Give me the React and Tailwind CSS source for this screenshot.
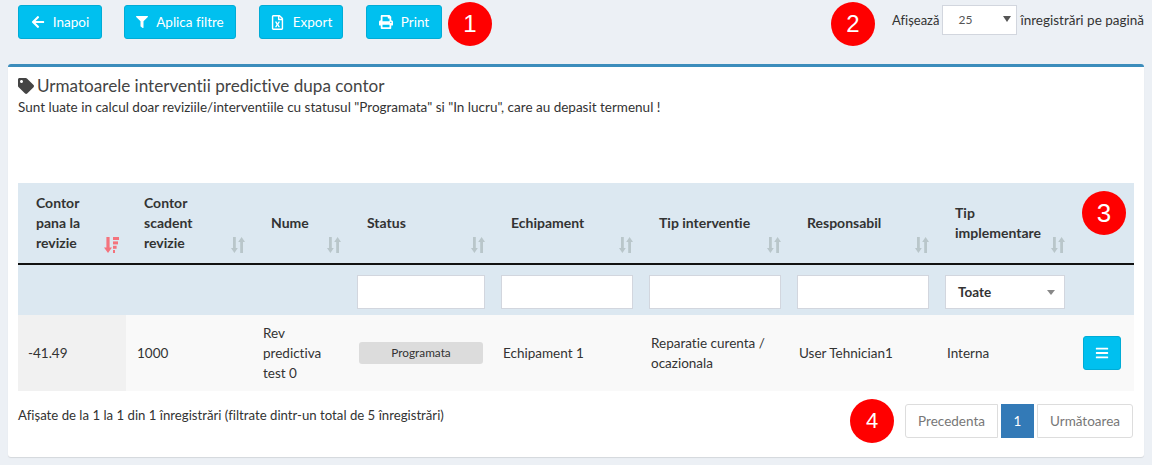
import { FaArrowLeft, FaFilter, FaRegFileExcel, FaPrint, FaTag, FaBars } from 'react-icons/fa'

const toolbarButtons = [
  { label: 'Inapoi', icon: FaArrowLeft, box: 'w-[84px]', iconSize: 'w-[14px] h-[14px]' },
  { label: 'Aplica filtre', icon: FaFilter, box: 'w-[112px] ml-[22px]', iconSize: 'w-[12px] h-[12px]' },
  { label: 'Export', icon: FaRegFileExcel, box: 'w-[84px] ml-[23px]', iconSize: 'w-[15px] h-[15px]' },
  { label: 'Print', icon: FaPrint, box: 'w-[76px] ml-[23px]', iconSize: 'w-[14px] h-[14px]' },
]

const columns = [
  { lines: ['Contor', 'pana la', 'revizie'], width: 'w-[108px]', sorted: true },
  { lines: ['Contor', 'scadent', 'revizie'], width: 'w-[127px]' },
  { lines: ['Nume'], width: 'w-[96px]' },
  { lines: ['Status'], width: 'w-[144px]' },
  { lines: ['Echipament'], width: 'w-[148px]' },
  { lines: ['Tip interventie'], width: 'w-[148px]' },
  { lines: ['Responsabil'], width: 'w-[148px]' },
  { lines: ['Tip', 'implementare'], width: 'w-[136px]' },
  { lines: [], width: 'w-[61px]' },
]

function Marker({ n, size = 'text-[24px]' }) {
  return (
    <div className={`w-11 h-11 rounded-full bg-[#ff0000] text-white flex items-center justify-center shrink-0 font-['Liberation_Sans',sans-serif] ${size}`}>
      {n}
    </div>
  )
}

function SortIcon({ active }) {
  if (active) {
    return (
      <svg className="absolute right-[7px] bottom-[10px] w-[15px] h-[16px] text-[#f4737d]" viewBox="0 0 15 16" fill="currentColor">
        <path d="M2.4 0h3.2v10.5H8L4 16 0 10.5h2.4z" />
        <rect x="9" y="0" width="6" height="3" />
        <rect x="9" y="4.4" width="5" height="3" />
        <rect x="9" y="8.8" width="3.6" height="3" />
        <rect x="9" y="13" width="2" height="3" />
      </svg>
    )
  }
  return (
    <svg className="absolute right-[8px] bottom-[10px] w-[14px] h-[16px] text-[#b9c6ca]" viewBox="0 0 14 16" fill="currentColor">
      <path d="M2 0h2.8v11h2L3.4 16 0 11h2z" />
      <path d="M9.2 16H12V5h2L10.6 0 7.2 5h2z" />
    </svg>
  )
}

function FilterInput() {
  return <input className="block w-full h-[34px] bg-white border border-[#d2d6de] border-solid outline-none" />
}

export default function App() {
  return (
    <div className="w-[1152px] h-[465px] overflow-hidden bg-[#ecf0f5] text-[#333] text-[13.5px] leading-5 [font-variant-ligatures:none] font-['Lato','Noto_Sans',sans-serif]">
      {/* Toolbar */}
      <div className="h-[64px] pl-[18px] pr-2 pt-[2px] flex items-start">
        <div className="flex items-start mt-[3px]">
          {toolbarButtons.map((b) => (
            <button key={b.label} className={`${b.box} h-[34px] flex items-center justify-center gap-[8px] bg-[#00c0ef] border border-[#00acd6] rounded-[3px] text-white`}>
              <b.icon className={b.iconSize} />
              {b.label}
            </button>
          ))}
        </div>
        <div className="ml-[6px]"><Marker n="1" /></div>
        <div className="ml-auto flex items-start">
          <Marker n="2" />
          <div className="ml-[17px] mt-[3px] h-[30px] flex items-center gap-[3px] whitespace-nowrap">
            <span className="text-[13px]">Afișează</span>
            <div className="w-[75px] h-[30px] bg-white border border-[#d2d6de] flex items-center justify-between pl-[15px] pr-[5px] text-[12px] text-[#555]">
              25
              <span className="w-0 h-0 border-x-[4px] border-x-transparent border-t-[6px] border-t-[#555] mb-[2px]" />
            </div>
            <span>înregistrări pe pagină</span>
          </div>
        </div>
      </div>

      {/* Card */}
      <div className="mx-2 h-[393px] bg-white border-t-[3px] border-[#3c8dbc] rounded-[3px] shadow-[0_1px_1px_rgba(0,0,0,0.1)] px-[10px] pt-[9px]">
        <h3 className="flex items-center gap-[3px] text-[17.1px] leading-5 text-[#444]">
          <FaTag className="w-4 h-4" />
          Urmatoarele interventii predictive dupa contor
        </h3>
        <p className="mt-[1px]">Sunt luate in calcul doar reviziile/interventiile cu statusul "Programata" si "In lucru", care au depasit termenul !</p>

        <div className="relative mt-[66px]">
          <table className="w-[1116px] table-fixed border-collapse">
            <colgroup>
              {columns.map((c, i) => <col key={i} className={c.width} />)}
            </colgroup>
            <thead className="bg-[#dce8f1]">
              <tr className="h-[81px] border-b-2 border-[#111]">
                {columns.map((c, i) => (
                  <th key={i} className="relative pl-[18px] pr-[20px] text-left font-bold text-[14px] align-middle">
                    {c.lines.map((l) => <div key={l} className="whitespace-nowrap">{l}</div>)}
                    {c.lines.length > 0 && <SortIcon active={c.sorted} />}
                  </th>
                ))}
              </tr>
              <tr className="h-[51px]">
                <td /><td /><td />
                <td className="px-2 pt-[4px]"><FilterInput /></td>
                <td className="px-2 pt-[4px]"><FilterInput /></td>
                <td className="px-2 pt-[4px]"><FilterInput /></td>
                <td className="px-2 pt-[4px]"><FilterInput /></td>
                <td className="px-2 pt-[4px]">
                  <div className="h-[34px] bg-white border border-[#d2d6de] flex items-center justify-between pl-3 pr-[9px] font-bold">
                    Toate
                    <span className="w-0 h-0 border-x-[4px] border-x-transparent border-t-[5px] border-t-[#888]" />
                  </div>
                </td>
                <td />
              </tr>
            </thead>
            <tbody className="bg-[#f9f9f9]">
              <tr className="h-[76px]">
                <td className="pl-[10px] bg-[#f1f1f1]">-41.49</td>
                <td className="pl-[11px]">1000</td>
                <td className="pl-[10px]">Rev<br />predictiva<br />test 0</td>
                <td className="px-[10px]">
                  <div className="h-[22px] bg-[#dcdcdc] rounded-[3px] flex items-center justify-center text-[11.8px]">Programata</div>
                </td>
                <td className="pl-[10px]">Echipament 1</td>
                <td className="pl-[10px]">Reparatie curenta /<br />ocazionala</td>
                <td className="pl-[10px]">User Tehnician1</td>
                <td className="pl-[10px]">Interna</td>
                <td className="pl-[10px]">
                  <button className="w-[38px] h-[34px] bg-[#00c0ef] border border-[#00acd6] rounded-[3px] flex items-center justify-center text-white">
                    <FaBars className="w-[14px] h-[14px]" />
                  </button>
                </td>
              </tr>
            </tbody>
          </table>
          <div className="absolute right-[8px] top-[8px]"><Marker n="3" size="text-[26px]" /></div>
        </div>

        {/* Footer */}
        <div className="flex items-start justify-between pt-[8px] pr-px">
          <div className="pt-[6px] text-[13.2px]">Afișate de la 1 la 1 din 1 înregistrări (filtrate dintr-un total de 5 înregistrări)</div>
          <div className="flex items-center">
            <div className="mr-[11px]"><Marker n="4" size="text-[22px]" /></div>
            <div className="flex items-center gap-[3px] h-[34px]">
              <div className="w-[93px] h-[34px] bg-white border border-[#ddd] rounded-l-[3px] flex items-center justify-center text-[#777]">Precedenta</div>
              <div className="w-[33px] h-[34px] bg-[#337ab7] text-white flex items-center justify-center">1</div>
              <div className="w-[96px] h-[34px] bg-white border border-[#ddd] rounded-r-[3px] flex items-center justify-center text-[#777]">Următoarea</div>
            </div>
          </div>
        </div>
      </div>
    </div>
  )
}
